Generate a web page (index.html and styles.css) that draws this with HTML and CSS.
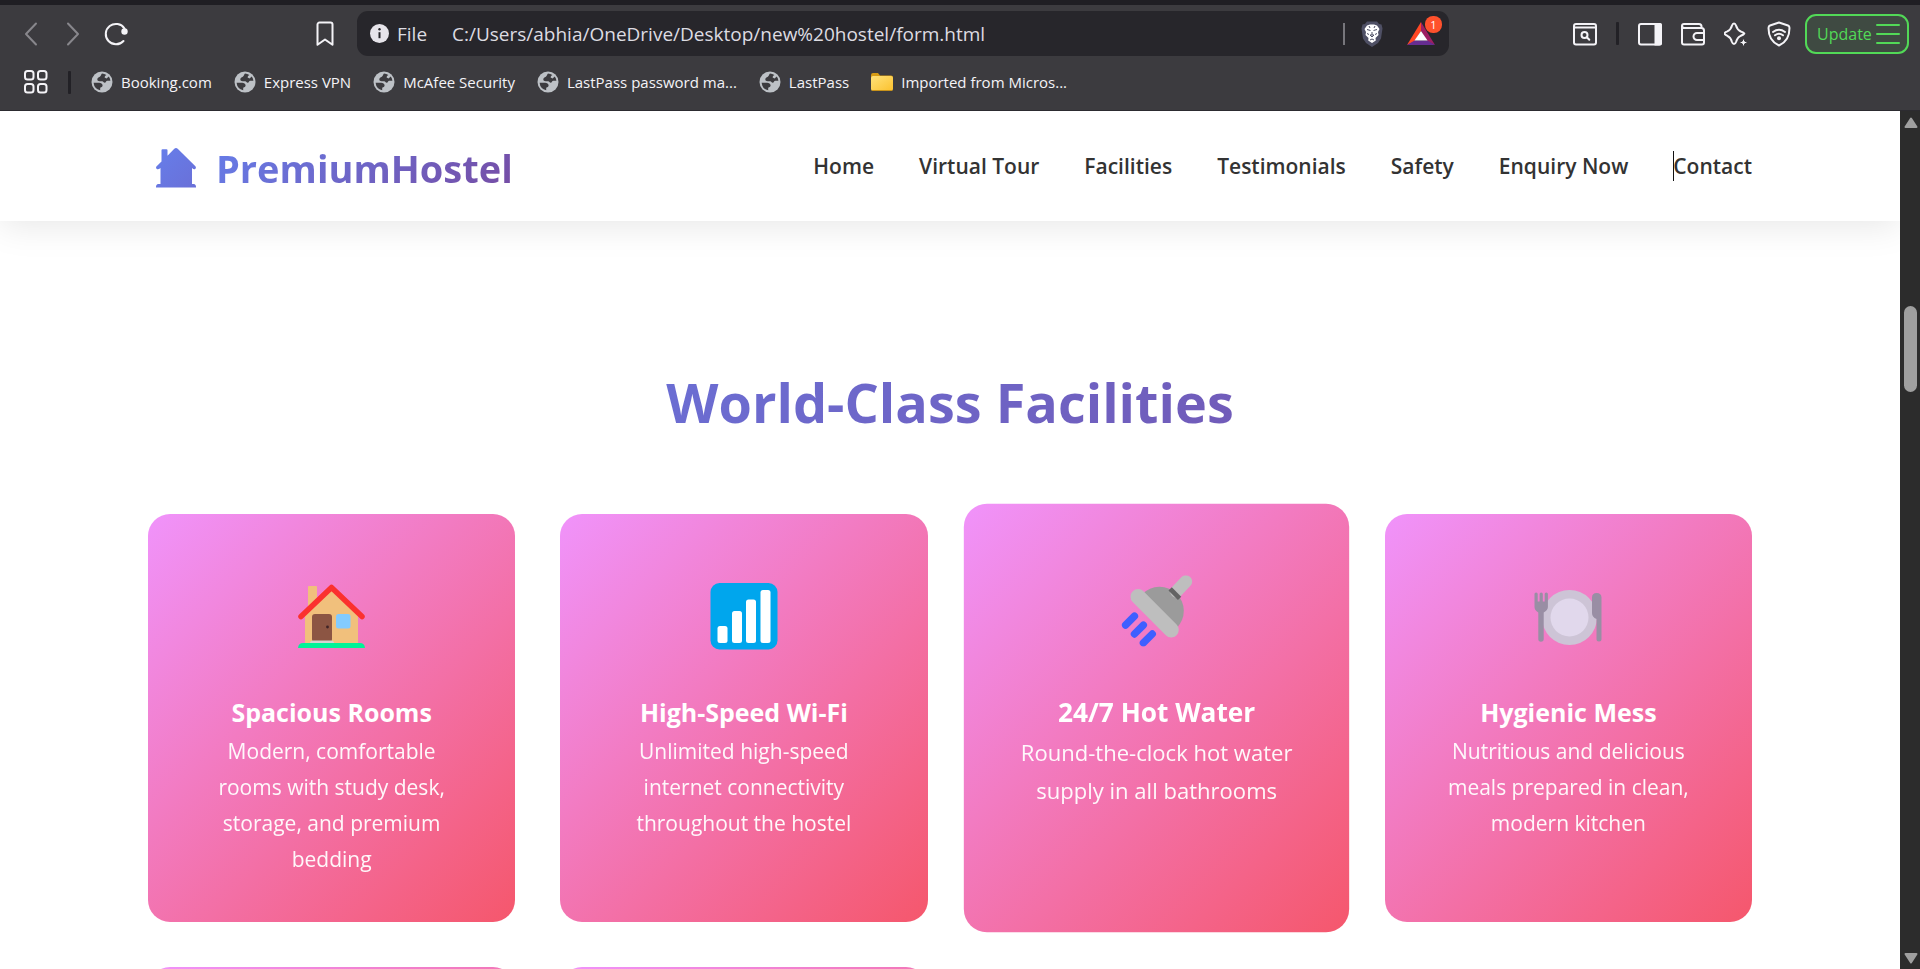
FILE: index.html
```html
<!DOCTYPE html>
<html lang="en">
<head>
<meta charset="utf-8">
<title>PremiumHostel</title>
<link rel="stylesheet" href="styles.css">
</head>
<body>
<svg class="defs" width="0" height="0" aria-hidden="true">
  <defs>
    <linearGradient id="logo-fill" x1="0" y1="0" x2="1" y2="1">
      <stop offset="0" stop-color="#667eea"/><stop offset="1" stop-color="#6a70d8"/>
    </linearGradient>
    <linearGradient id="folder-fill" x1="0" y1="0" x2="1" y2="1">
      <stop offset="0" stop-color="#ffe27a"/><stop offset="1" stop-color="#fbc12d"/>
    </linearGradient>
    <symbol id="globe" viewBox="0 0 22 22">
      <circle cx="11" cy="11" r="10.5" fill="#bdc1c6"/>
      <path d="M11 2.6c-1 1-1 2.600-2.200 3.200C7.600 6.400 6.300 7.200 6.300 8.600c0 1.300 1 1.700 2.300 1.700h2.600c1.200 0 1.300 1.500 2.500 1.500 1.400 0 1.200-2 2.500-2h3.200a8.400 8.400 0 0 0-1.600-4.200l-2.300 1.800-1.900-.8.400-1.600 1.400-.9A8.400 8.400 0 0 0 11 2.600zM2.600 11.800a8.400 8.400 0 0 0 6.600 7.400v-2.500c1.200-.4 2.400-.9 2.400-2.200 0-1.800-1.800-2.600-3.400-2.700z" fill="#3c3b3f"/>
    </symbol>
  </defs>
</svg>
<div class="browser">
  <header class="chrome">
    <div class="toolbar">
      <div class="tools-left">
        <button class="tool" aria-label="Back"><svg width="14" height="24" viewBox="0 0 14 24"><path d="M12 1.500 2 12l10 10.500" class="line dim"/></svg></button>
        <button class="tool" aria-label="Forward"><svg width="14" height="24" viewBox="0 0 14 24"><path d="M2 1.500 12 12 2 22.500" class="line dim"/></svg></button>
        <button class="tool reload" aria-label="Reload"><svg width="26" height="24" viewBox="0 0 26 24"><path d="M20.500 19A10.200 10.200 0 1 1 21.500 6.500" class="line"/><circle cx="21.500" cy="9.500" r="3.200" fill="#f4f3f7"/></svg></button>
      </div>
      <button class="tool" aria-label="Bookmark this page"><svg width="18" height="26" viewBox="0 0 18 26"><path d="M3.500 1.500h11a2 2 0 0 1 2 2v20.300L9 18.500l-7.500 5.300V3.500a2 2 0 0 1 2-2z" class="line"/></svg></button>
      <div class="address">
        <svg width="19" height="19" viewBox="0 0 19 19"><circle cx="9.500" cy="9.500" r="9.500" fill="#e6e4ea"/><circle cx="9.500" cy="5.300" r="1.200" fill="#27262b"/><path d="M9.500 8.200v6" stroke="#27262b" stroke-width="2"/></svg>
        <label class="scheme" for="url">File</label>
        <input id="url" class="url" type="text" value="C:/Users/abhia/OneDrive/Desktop/new%20hostel/form.html">
        <span class="address-rule"></span>
        <button class="tool" aria-label="Shields"><svg width="22" height="26" viewBox="0 0 22 26"><path d="M6 .5h10l2 2.500 2.500.5 1 4-1.500 10-3 4.500-6 4-6-4-3-4.500L.5 7.500l1-4L4 3z" fill="#4f5065"/><path d="M6 4.500l3-1h4l3 1 2.500 3.500-1.500 3 .5 3-3 3 .3 2.500L11 22l-3.800-2.500.3-2.500-3-3 .5-3-1.500-3z" fill="#fff"/><path d="M6 8.500l3.500 1M16 8.500l-3.500 1M11 11v3M8 5l1 2M14 5l-1 2M6 12.500l2 1M16 12.500l-2 1M9 14h4l-2 2zM9 19l2-1 2 1" fill="none" stroke="#4f5065" stroke-width="1"/></svg></button>
        <button class="tool rewards" aria-label="Rewards"><svg width="28" height="24" viewBox="0 0 28 24"><path d="M14 0 0 23l7.500-3.500L14 9z" fill="#ff4724"/><path d="M14 0l14 23-7.500-3.500L14 9z" fill="#9e1f63"/><path d="M0 23h28l-7.500-4.500h-13z" fill="#662d91"/><path d="M14 9l6.500 9.500h-13z" fill="#fff"/></svg><span class="badge">1</span></button>
      </div>
      <div class="tools-right">
        <button class="tool" aria-label="Search page"><svg width="24" height="24" viewBox="0 0 24 24"><rect x="1" y="2" width="22" height="20.500" rx="2" class="line"/><path d="M1 5.500h22" class="line"/><circle cx="11.500" cy="13" r="3" class="line"/><path d="M13.800 15.300l2.500 2.500" class="line"/></svg></button>
        <span class="rule"></span>
        <button class="tool" aria-label="Sidebar"><svg width="24" height="24" viewBox="0 0 24 24"><rect x="1" y="2" width="22" height="20.500" rx="2" class="line"/><path d="M16.500 1H22a2 2 0 0 1 2 2v18.500a2 2 0 0 1-2 2h-5.500z" fill="#f4f3f7"/></svg></button>
        <button class="tool" aria-label="Wallet"><svg width="24" height="24" viewBox="0 0 24 24"><path d="M20.500 6V4.500a2.500 2.500 0 0 0-2.500-2.500H3a2 2 0 0 0-2 2V20.500a2 2 0 0 0 2 2h18a2 2 0 0 0 2-2V8.500A2.500 2.500 0 0 0 20.500 6H3.500A2.500 2.500 0 0 1 1 3.800M23 11h-7a3.500 3.500 0 0 0 0 7h7" class="line"/></svg></button>
        <button class="tool" aria-label="Assistant"><svg width="24" height="26" viewBox="0 0 24 26"><path d="M10 2.500q1.300 0 2 2 1.200 4.300 4.800 6 3 .9 3.500 2-.5 1.100-3.500 2.300-3.400 1.500-4.800 6.200-.7 2.100-2 2.100t-2-2.100q-1.200-4.600-4.700-6.200-2.600-1-2.900-2.300.3-1.200 2.900-2.100 3.500-1.500 4.700-5.900.7-2 2-2z" class="line"/><path d="M19.500 17l1.300 3.200 3.200 1.300-3.200 1.300-1.300 3.200-1.300-3.200-3.200-1.300 3.200-1.300z" fill="#f4f3f7" stroke="#3c3b3f"/></svg></button>
        <button class="tool" aria-label="VPN"><svg width="24" height="26" viewBox="0 0 24 26"><path d="M12 1.500 21 4.500q1.500.6 1.500 2.500 0 13-10.500 17.500Q1.500 20 1.500 7q0-1.900 1.500-2.500z" class="line"/><path d="M6 11q6-4.500 12 0M8 14.300q4-3.200 8 0" class="line"/><circle cx="12" cy="17.300" r="2" fill="#f4f3f7"/></svg></button>
        <button class="update"><span>Update</span><svg width="24" height="22" viewBox="0 0 24 22"><path d="M1 2h22M1 11h22M1 20h22" fill="none" stroke="#52d957" stroke-width="2" stroke-linecap="round"/></svg></button>
      </div>
    </div>
    <nav class="bookmarks" aria-label="Bookmarks">
      <button class="tool" aria-label="Apps"><svg width="24" height="24" viewBox="0 0 24 24"><g class="line"><rect x="1" y="1" width="8.500" height="8.500" rx="2.500"/><rect x="14" y="1" width="8.500" height="8.500" rx="2.500"/><rect x="1" y="14" width="8.500" height="8.500" rx="2.500"/><rect x="14" y="14" width="8.500" height="8.500" rx="2.500"/></g></svg></button>
      <span class="rule"></span>
      <div class="marks">
        <a class="mark" href="#"><svg width="22" height="22"><use href="#globe"/></svg>Booking.com</a>
        <a class="mark" href="#"><svg width="22" height="22"><use href="#globe"/></svg>Express VPN</a>
        <a class="mark" href="#"><svg width="22" height="22"><use href="#globe"/></svg>McAfee Security</a>
        <a class="mark" href="#"><svg width="22" height="22"><use href="#globe"/></svg>LastPass password ma...</a>
        <a class="mark" href="#"><svg width="22" height="22"><use href="#globe"/></svg>LastPass</a>
        <a class="mark" href="#"><svg width="22" height="20" viewBox="0 0 22 20"><path d="M0 3a2 2 0 0 1 2-2h5l2 2.500h11a2 2 0 0 1 2 2V10H0z" fill="#d69b14"/><rect y="4" width="22" height="15" rx="2" fill="url(#folder-fill)"/><path d="M1 18.500h20" stroke="#c8921a"/></svg>Imported from Micros...</a>
      </div>
    </nav>
  </header>

  <div class="viewport">
    <div class="page">
      <header class="site-header">
        <a class="logo" href="#">
          <svg width="40" height="40" viewBox="0 0 40 40"><path d="M5.500 2.200q0-1 1-1h4q1 0 1 1v5.600L18.300.8q1.700-1.500 3.400 0L39.400 18.200q1.300 2-.6 3-1.300.3-2.800-1.200V36h2.200q1.800.5 1.800 2.500v1H0v-1Q0 36.500 1.800 36H4.500V20q-1.800 1.500-3.400 1.200-1.700-.9-.7-2.600L5.500 13.500z" fill="url(#logo-fill)"/></svg>
          <span class="logo-name">PremiumHostel</span>
        </a>
        <nav class="site-nav">
          <a href="#">Home</a>
          <a href="#">Virtual Tour</a>
          <a href="#">Facilities</a>
          <a href="#">Testimonials</a>
          <a href="#">Safety</a>
          <a href="#">Enquiry Now</a>
          <a class="with-caret" href="#">Contact</a>
        </nav>
      </header>
      <main class="facilities">
        <h2 class="section-title">World-Class Facilities</h2>
        <div class="cards">
          <article class="card">
            <div class="card-icon"><svg width="68" height="68" viewBox="0 0 68 68"><rect x="10" y="4" width="9" height="26" rx="1" fill="#f1c07c"/><path d="M7 32 34 7l26 25v30H7z" fill="#f1c07c"/><rect x="14" y="32" width="20" height="28" rx="3" fill="#8c5543"/><circle cx="29.500" cy="45" r="1.400" fill="#3f2326"/><path d="M12 61q0-2.500 3-2.500h18q3 0 3 2.500z" fill="#d3d3d3"/><rect x="38" y="32" width="14.500" height="14.500" rx="2.500" fill="#83cbff"/><path d="M3 34.500 33.500 5.500 64 34.500" fill="none" stroke="#fb312e" stroke-width="5.500" stroke-linecap="round" stroke-linejoin="round"/><path d="M0 66q.5-5 5-5h57q4.500 0 5 5z" fill="#00f397"/></svg></div>
            <h3>Spacious Rooms</h3>
            <p>Modern, comfortable rooms with study desk, storage, and premium bedding</p>
          </article>
          <article class="card">
            <div class="card-icon"><svg width="68" height="68" viewBox="0 0 68 68"><rect x=".5" y="1" width="67" height="66.500" rx="9" fill="#00a6ed"/><g fill="#fff"><rect x="7.500" y="44" width="10" height="17" rx="2.500"/><rect x="22" y="29" width="10" height="32" rx="2.500"/><rect x="36" y="17.500" width="10" height="43.500" rx="2.500"/><rect x="50.500" y="8" width="10" height="53" rx="2.500"/></g></svg></div>
            <h3>High-Speed Wi-Fi</h3>
            <p>Unlimited high-speed internet connectivity throughout the hostel</p>
          </article>
          <article class="card card-raised">
            <div class="card-icon"><svg width="68" height="68" viewBox="0 0 68 68"><path d="M20 18a22.500 22.500 0 0 1 33 32z" fill="#9b9b9b"/><path d="M16 20.500 47.500 52" stroke="#bebebe" stroke-width="14.500" stroke-linecap="round"/><path d="M52.500 15.500 61.500 6" stroke="#bebebe" stroke-width="12" stroke-linecap="round"/><path d="M46.500 13 55.500 22" stroke="#636363" stroke-width="4.500"/><path d="M12.500 39 4 47.500M21 47.500 12.500 56M29.500 56 21 64.500" stroke="#3f5fff" stroke-width="7" stroke-linecap="round"/></svg></div>
            <h3>24/7 Hot Water</h3>
            <p>Round-the-clock hot water supply in all bathrooms</p>
          </article>
          <article class="card">
            <div class="card-icon"><svg width="68" height="68" viewBox="0 0 68 68"><circle cx="35.500" cy="35.500" r="27.500" fill="#cdc4d6"/><circle cx="35.500" cy="35.500" r="19" fill="#e1d8ec"/><path d="M.5 12a1.600 1.600 0 0 1 3.200 0v7.500h1.900V12a1.600 1.600 0 0 1 3.200 0v7.500h1.900V12a1.600 1.600 0 0 1 3.200 0v13q0 3-4.200 5.500V57a2.700 2.700 0 0 1-5.400 0V30.500Q.5 28 .5 25z" fill="#998ea4"/><path d="M58 15.500q0-4.500 4.700-4.500t4.800 4.500V57a2.500 2.500 0 0 1-5 0V37Q58 35 58 31z" fill="#998ea4"/></svg></div>
            <h3>Hygienic Mess</h3>
            <p>Nutritious and delicious meals prepared in clean, modern kitchen</p>
          </article>
          <article class="card"></article>
          <article class="card"></article>
        </div>
      </main>
    </div>
    <div class="scrollbar" aria-hidden="true">
      <svg width="14" height="11" viewBox="0 0 14 11"><path d="M7 1.500 12.500 10h-11z" class="arrow"/></svg>
      <span class="track-above"></span>
      <span class="thumb"></span>
      <span class="track-below"></span>
      <svg width="14" height="11" viewBox="0 0 14 11"><path d="M7 9.500 12.500 1h-11z" class="arrow"/></svg>
    </div>
  </div>
</div>
</body>
</html>
```
FILE: styles.css
```css
* { box-sizing: border-box; margin: 0; padding: 0; }

body {
  font-family: "Open Sans", "Noto Sans", sans-serif;
  background: #fff;
}

.defs { position: absolute; }
svg { display: block; flex: none; }
a { color: inherit; text-decoration: none; }
button, input { font: inherit; color: inherit; border: 0; background: none; }

.browser {
  display: flex;
  flex-direction: column;
  height: 100vh;
  overflow: hidden;
}

/* Browser frame */
.chrome {
  flex: none;
  border-top: 5px solid #1f1e23;
  border-bottom: 1px solid #2c2b30;
  background: #3c3b3f;
  color: #f4f3f7;
}

.toolbar {
  display: flex;
  align-items: center;
  height: 57px;
  padding: 0 11px 0 24px;
}

.tool { position: relative; display: flex; align-items: center; }
.line { fill: none; stroke: #f4f3f7; stroke-width: 2; stroke-linecap: round; stroke-linejoin: round; }
.line.dim { stroke: #88878c; }

.tools-left { display: flex; gap: 28px; width: 292px; }
.reload { margin-left: -5px; }

.address {
  display: flex;
  align-items: center;
  flex: 1;
  height: 45px;
  margin: 0 124px 0 23px;
  padding: 0 14px 0 13px;
  border-radius: 11px;
  background: #27262b;
  font-size: 19px;
}
.scheme { width: 55px; padding-left: 8px; flex: none; }
.scheme, .url { color: #dddce2; }
.url { flex: 1; min-width: 0; margin-left: 8px; }
.address-rule { width: 2px; height: 22px; margin-right: 16px; background: #77767c; }
.rewards { margin-left: 24px; }
.badge {
  position: absolute;
  top: -6px;
  right: -7px;
  width: 17px;
  height: 17px;
  border-radius: 8px;
  background: #ff512c;
  color: #fff;
  font-size: 11px;
  line-height: 17px;
  text-align: center;
}

.tools-right { display: flex; align-items: center; gap: 19px; }
.rule { width: 3px; height: 23px; border-radius: 1px; background: #222126; }

.update {
  display: flex;
  align-items: center;
  justify-content: space-between;
  width: 104px;
  height: 40px;
  margin-left: -5px;
  padding: 0 7px 0 10px;
  border: 2px solid #52d957;
  border-radius: 11px;
  background: #3f4a42;
  color: #52d957;
  font-size: 16px;
}

.bookmarks {
  display: flex;
  align-items: center;
  gap: 20px;
  height: 48px;
  padding: 0 24px 8px;
}
.marks { display: flex; gap: 22px; font-size: 15px; }
.mark { display: flex; align-items: center; gap: 8px; white-space: nowrap; }

/* Web page area */
.viewport { display: flex; flex: 1; min-height: 0; }
.page { flex: 1; min-width: 0; overflow: hidden; background: #fff; }

.site-header {
  display: flex;
  align-items: center;
  justify-content: space-between;
  height: 110px;
  padding: 0 148px;
  box-shadow: 0 4px 34px rgba(0, 0, 0, 0.1);
}

.logo { display: flex; align-items: center; gap: 20px; padding: 3px 0 0 8px; }
.logo-name {
  font-size: 38px;
  font-weight: 700;
  line-height: 64px;
}
.logo-name, .section-title {
  background: linear-gradient(135deg, #667eea 0%, #764ba2 100%);
  -webkit-background-clip: text;
  background-clip: text;
  color: transparent;
}

.site-nav {
  display: flex;
  gap: 45px;
  color: #333;
  font-size: 21px;
  font-weight: 600;
  line-height: 36px;
}
.with-caret { position: relative; }
.with-caret::before {
  content: "";
  position: absolute;
  top: 3px;
  left: 0;
  width: 1px;
  height: 30px;
  background: #111;
}

.facilities { padding: 136px 148px 0; }
.section-title {
  margin-bottom: 66px;
  font-size: 54px;
  font-weight: 700;
  line-height: 91px;
  text-align: center;
}

.cards { display: grid; grid-template-columns: repeat(4, 1fr); gap: 45px; }
.card {
  min-height: 408px;
  padding: 48px 48px 45px;
  border-radius: 22px;
  background: linear-gradient(135deg, #f093fb 0%, #f5576c 100%);
  color: #fff;
  text-align: center;
}
.card-raised { transform: scale(1.05); }
.card-icon {
  display: flex;
  align-items: center;
  justify-content: center;
  height: 108px;
  margin-bottom: 22px;
}
.card h3 { font-size: 25px; font-weight: 700; line-height: 41px; }
.card p { font-size: 21px; line-height: 36px; opacity: 0.95; }

.scrollbar {
  display: flex;
  flex-direction: column;
  align-items: center;
  width: 20px;
  padding: 6px 2px 5px 3px;
  background: #2c2c2c;
}
.arrow { fill: #9f9f9f; stroke: #9f9f9f; stroke-width: 2; stroke-linejoin: round; }
.track-above { flex: 178; }
.thumb { width: 13px; height: 86px; border-radius: 7px; background: #9f9f9f; }
.track-below { flex: 561; }
```
